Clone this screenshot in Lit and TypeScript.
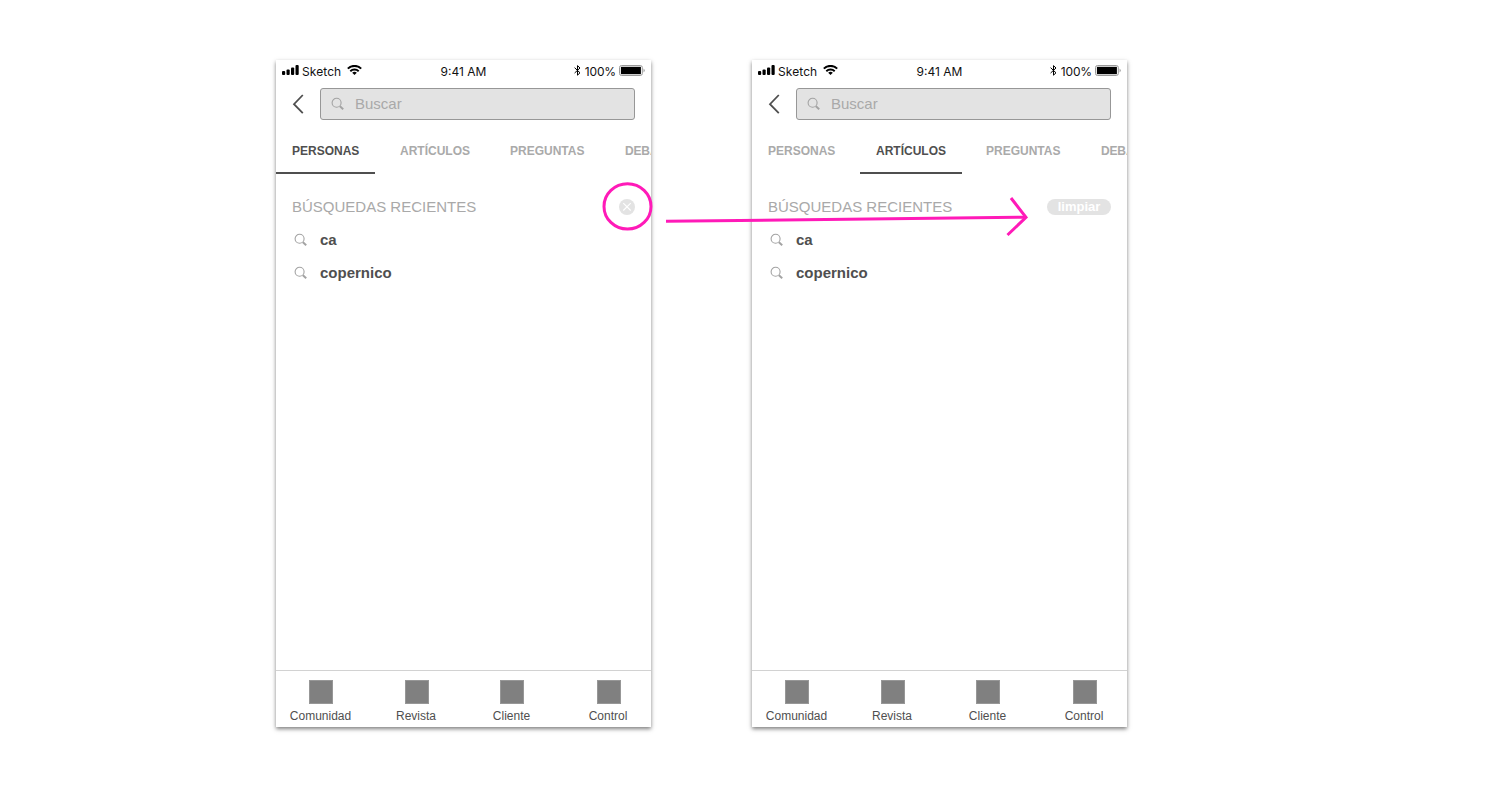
import { LitElement, html, css } from "lit";
import { customElement, property } from "lit/decorators.js";
import { classMap } from "lit/directives/class-map.js";

const searchIcon = html`<svg class="search" width="14" height="14" viewBox="0 0 14 14" fill="none">
  <circle cx="5.6" cy="5.8" r="4.5" stroke="#a3a3a3" stroke-width="1.1" />
  <path d="M8.9 9.2 L12.2 12.3" stroke="#a3a3a3" stroke-width="1.9" />
</svg>`;

@customElement("status-bar")
class StatusBar extends LitElement {
  static styles = css`
    :host {
      display: grid;
      grid-template-columns: 1fr auto 1fr;
      align-items: start;
      height: 28px;
      font: 12px/14px Inter, sans-serif;
      color: #111;
    }
    .side { display: flex; align-items: flex-start; padding: 5px 5px 0 6px; }
    .right { justify-content: flex-end; padding-right: 6px; }
    .label { white-space: nowrap; }
    .carrier { margin: 0 6px 0 3px; letter-spacing: 0.08px; }
    .time { padding-top: 5px; }
    .pct { margin: 0 3px 0 4px; letter-spacing: -0.15px; }
    svg { display: block; flex: none; }
  `;
  render() {
    return html`
      <div class="side">
        <svg width="17" height="10" viewBox="0 0 17 10">
          <rect x="0" y="6" width="3.2" height="4" rx="1" />
          <rect x="4.5" y="4.5" width="3.2" height="5.5" rx="1" />
          <rect x="9" y="2.5" width="3.2" height="7.5" rx="1" />
          <rect x="13.5" y="0" width="3.2" height="10" rx="1" />
        </svg>
        <span class="label carrier">Sketch</span>
        <svg width="15" height="10" viewBox="0 0 15 10" fill="none" stroke="#000">
          <path d="M0.8 3.6 A9.6 9.6 0 0 1 14.2 3.6" stroke-width="2" />
          <path d="M3.3 6.2 A6 6 0 0 1 11.7 6.2" stroke-width="1.9" />
          <path d="M5.2 7.8 A3.3 3.3 0 0 1 9.8 7.8 L7.5 10 Z" fill="#000" stroke="none" />
        </svg>
      </div>
      <span class="label time">9:41 AM</span>
      <div class="side right">
        <svg width="7" height="11" viewBox="0 0 7 11" fill="none" stroke="#000" stroke-width="1">
          <path d="M0.6 2.7 L6 7.8 L3.5 10.2 V0.6 L6 3 L0.6 8" />
        </svg>
        <span class="label pct">100%</span>
        <svg width="26" height="11" viewBox="0 0 26 11">
          <rect x="0.5" y="0.5" width="22.8" height="10" rx="2" fill="#fff" stroke="#999" />
          <rect x="1.9" y="1.8" width="20" height="7.4" fill="#000" />
          <path d="M24.6 3.6 Q26.6 5.5 24.6 7.4 Z" fill="#888" />
        </svg>
      </div>
    `;
  }
}

@customElement("search-screen")
class SearchScreen extends LitElement {
  @property({ type: Number }) active = 0;
  @property() clear = "icon";

  static styles = css`
    :host {
      display: flex;
      flex-direction: column;
      width: 375px;
      height: 667px;
      background: #fff;
      box-shadow: 0 2px 4px rgba(0, 0, 0, 0.5);
      font-family: "Liberation Sans", Arial, sans-serif;
      color: #4f4f4f;
    }
    svg { display: block; flex: none; }
    .top { display: flex; align-items: center; height: 32px; padding: 0 16px; }
    .field {
      box-sizing: border-box;
      display: flex;
      align-items: center;
      gap: 10px;
      flex: 1;
      height: 32px;
      padding-left: 10px;
      border: 1px solid #979797;
      border-radius: 3px;
      background: #e3e3e3;
      color: #a9a9a9;
      font-size: 15px;
      line-height: 17px;
    }
    .field span { padding-bottom: 1px; }
    .tabs {
      display: grid;
      grid-template-columns: 108px 110px 115px 100px;
      height: 54px;
      overflow: hidden;
      color: #aaa;
      font: bold 12px/14px "Liberation Sans", Arial, sans-serif;
    }
    .tab {
      box-sizing: border-box;
      justify-self: start;
      height: 54px;
      padding: 24px 16px 0;
      border-bottom: 2px solid transparent;
    }
    .tab:last-child { letter-spacing: -0.15px; }
    .on { color: #4f4f4f; border-color: #4f4f4f; }
    .heading {
      display: flex;
      align-items: center;
      justify-content: space-between;
      height: 18px;
      margin-top: 24px;
      padding: 0 16px;
      color: #a9a9a9;
      font-size: 15px;
      line-height: 16px;
    }
    .pill {
      width: 64px;
      height: 16px;
      border-radius: 8px;
      background: #e3e3e3;
      color: #fff;
      font: bold 13px/16px "Liberation Sans", Arial, sans-serif;
      text-align: center;
    }
    .list { flex: 1; padding: 7px 18px 0; }
    .item {
      display: flex;
      align-items: center;
      gap: 12px;
      height: 33px;
      font: bold 15px/17px "Liberation Sans", Arial, sans-serif;
    }
    .nav {
      box-sizing: border-box;
      display: grid;
      grid-template-columns: 90px 101px 90px 103px;
      height: 57px;
      border-top: 1px solid #d2d2d2;
      margin-right: -9px;
      clip-path: inset(0 9px 0 0);
      font-size: 12px;
      line-height: 14px;
    }
    .dest { display: flex; flex-direction: column; align-items: center; gap: 5px; padding-top: 9px; }
    .name { padding-right: 1px; }
    .box { box-sizing: border-box; width: 24px; height: 24px; background: #808080; border: 1px solid #979797; }
  `;

  render() {
    const tabs = ["PERSONAS", "ARTÍCULOS", "PREGUNTAS", "DEBATES"];
    return html`
      <status-bar></status-bar>
      <div class="top">
        <svg width="28" height="20" viewBox="0 0 28 20" fill="none">
          <path d="M10.8 1 L2 10.2 L10.8 19.2" stroke="#4f4f4f" stroke-width="1.8" />
        </svg>
        <div class="field">${searchIcon}<span>Buscar</span></div>
      </div>
      <div class="tabs">
        ${tabs.map((t, i) => html`<div class=${classMap({ tab: true, on: i === this.active })}>${t}</div>`)}
      </div>
      <div class="heading">
        <span>BÚSQUEDAS RECIENTES</span>
        ${this.clear === "icon"
          ? html`<svg width="16" height="16" viewBox="0 0 16 16">
              <circle cx="8" cy="8" r="8" fill="#e3e3e3" />
              <path d="M4.3 4.1 L11.7 11.5 M11.7 4.1 L4.3 11.5" stroke="#fff" stroke-width="1.1" />
            </svg>`
          : html`<span class="pill">limpiar</span>`}
      </div>
      <div class="list">
        ${["ca", "copernico"].map((q) => html`<div class="item">${searchIcon}<span>${q}</span></div>`)}
      </div>
      <div class="nav">
        ${["Comunidad", "Revista", "Cliente", "Control"].map(
          (n) => html`<div class="dest"><span class="box"></span><span class="name">${n}</span></div>`
        )}
      </div>
    `;
  }
}

@customElement("app-root")
class AppRoot extends LitElement {
  static styles = css`
    :host {
      box-sizing: border-box;
      display: flex;
      gap: 101px;
      position: relative;
      width: 1511px;
      height: 798px;
      padding: 60px 0 0 276px;
      overflow: hidden;
      background: #fff;
    }
    .notes { position: absolute; top: 0; left: 0; }
  `;
  render() {
    return html`
      <search-screen .active=${0} clear="icon"></search-screen>
      <search-screen .active=${1} clear="label"></search-screen>
      <svg class="notes" width="1511" height="798" fill="none" stroke="#ff1ab8" stroke-width="3">
        <ellipse cx="627.5" cy="206.4" rx="23.5" ry="22.7" />
        <path d="M666 221.3 L1026 217.2" />
        <path d="M1011 198 L1026 217.3 L1007.5 235" />
      </svg>
    `;
  }
}
